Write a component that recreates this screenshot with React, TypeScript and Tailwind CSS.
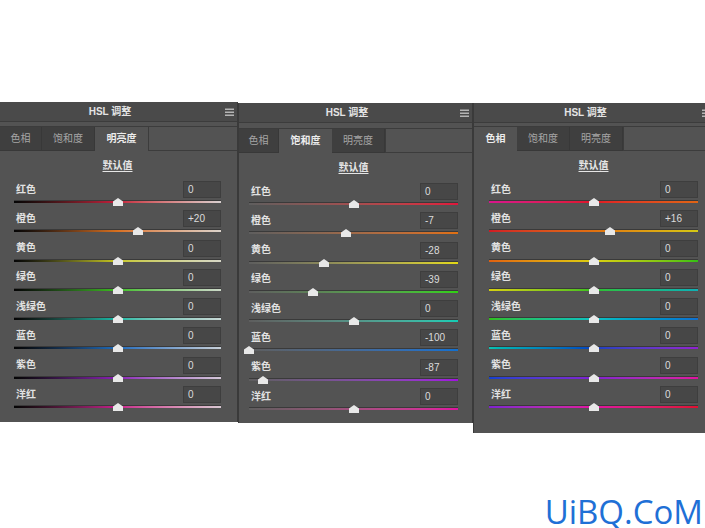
import React from 'react'

const names = ['红色', '橙色', '黄色', '绿色', '浅绿色', '蓝色', '紫色', '洋红']
const tabs = ['色相', '饱和度', '明亮度']

const lightGrads = [
  'from-[#050505] via-[#c41e3c] to-[#d8d0d0]',
  'from-[#050505] via-[#d8701e] to-[#dcd4cc]',
  'from-[#050505] via-[#c8c81e] to-[#d8d8c8]',
  'from-[#050505] via-[#3cbe1e] to-[#ccd8c8]',
  'from-[#050505] via-[#14bca8] to-[#c8d8d6]',
  'from-[#050505] via-[#1e6cbc] to-[#c8d0d8]',
  'from-[#050505] via-[#8c1eb8] to-[#d4c8d8]',
  'from-[#050505] via-[#c81e8c] to-[#d8c8d2]',
]

const satGrads = [
  'from-[#5e5e5e] to-[#e0143c]',
  'from-[#5e5e5e] to-[#e07010]',
  'from-[#5e5e5e] to-[#e2d810]',
  'from-[#5e5e5e] to-[#30d010]',
  'from-[#5e5e5e] to-[#10ccb4]',
  'from-[#5e5e5e] to-[#1070d0]',
  'from-[#5e5e5e] to-[#a010e0]',
  'from-[#5e5e5e] to-[#e010a0]',
]

const hueGrads = [
  'from-[#d8148c] via-[#e01424] to-[#e06414]',
  'from-[#d01a24] via-[#e07010] to-[#d4c814]',
  'from-[#e06010] via-[#dcd010] to-[#30c014]',
  'from-[#d4d010] via-[#30c020] to-[#10b0b4]',
  'from-[#30c014] via-[#10c0c0] to-[#1070d0]',
  'from-[#10c0b0] via-[#1040c0] to-[#9020d0]',
  'from-[#1040d0] via-[#8020d0] to-[#e010a0]',
  'from-[#8020d0] via-[#e010a0] to-[#e01030]',
]

const Burger = () => (
  <svg width="9" height="8" viewBox="0 0 9 8" className="mr-[3px] shrink-0">
    <rect x="0" y="0.5" width="9" height="1.5" fill="#b4b4b4" />
    <rect x="0" y="3.5" width="9" height="1.5" fill="#b4b4b4" />
    <rect x="0" y="6.5" width="9" height="1.5" fill="#b4b4b4" />
  </svg>
)

const Thumb = ({ pct }: { pct: number }) => (
  <svg
    width="10"
    height="8"
    viewBox="0 0 10 8"
    className="absolute top-[-3px]"
    style={{ left: `calc(${pct}% - 5px)` }}
  >
    <polygon points="5,0 10,3.5 10,8 0,8 0,3.5" fill="#e8e8e8" />
  </svg>
)

type PanelProps = {
  active: number
  values: number[]
  grads: string[]
  outer: string
  spacer: string
  firstTab: string
  pad: string
}

const fmt = (v: number) => (v > 0 ? `+${v}` : `${v}`)

const Panel = ({ active, values, grads, outer, spacer, firstTab, pad }: PanelProps) => {
  return (
    <div className={`flex shrink-0 flex-col bg-[#535353] ${outer}`}>
      <div className="flex h-[20px] shrink-0 items-center border-b border-[#3c3c3c] bg-[#4a4a4a]">
        <div className="flex-1 pr-[5px] text-center text-[10px] font-bold leading-[14px] text-[#e4e4e4]">
          HSL 调整
        </div>
        <Burger />
      </div>
      <div className={spacer} />
      <div className="flex h-[25px] shrink-0 border-t border-[#3c3c3c]">
        {tabs.map((t, i) => (
          <div
            key={t}
            className={`flex items-center justify-center text-[10px] leading-[14px] ${
              i === 0 ? firstTab : 'w-[53px]'
            } ${
              i === active
                ? 'bg-[#535353] font-bold text-[#ececec]'
                : 'border-b border-r border-[#383838] bg-[#3f3f3f] text-[#a6a6a6]'
            }`}
          >
            {t}
          </div>
        ))}
        <div className="flex-1 border-b border-l border-[#3c3c3c]" />
      </div>
      <div className={`flex flex-col ${pad}`}>
        <div className="mt-[8px] text-center text-[10px] font-bold leading-[14px] text-[#e6e6e6] underline underline-offset-2">
          默认值
        </div>
        <div className="mt-[8px] flex flex-col">
          {names.map((n, i) => (
            <div key={n} className="flex h-[29.3px] flex-col">
              <div className="flex h-[17px] items-center justify-between">
                <span className="pl-[2px] text-[10px] font-semibold leading-[14px] text-[#e2e2e2]">{n}</span>
                <div className="flex h-[17px] w-[38px] items-center border border-[#3e3e3e] bg-[#474747] pl-[4px] text-[10px] text-[#dcdcdc]">
                  {fmt(values[i])}
                </div>
              </div>
              <div className={`relative mt-[3px] h-[2px] bg-linear-to-r shadow-[0_-1px_0_#3a3a3a] ${grads[i]}`}>
                <Thumb pct={50 + values[i] / 2} />
              </div>
            </div>
          ))}
        </div>
      </div>
    </div>
  )
}

export default function App() {
  return (
    <div className="relative h-[528px] w-[705px] overflow-hidden bg-white font-[family-name:Liberation_Sans,Noto_Sans_CJK_SC,sans-serif]">
      <div className="flex items-start pt-[102px]">
        <Panel
          active={2}
          values={[0, 20, 0, 0, 0, 0, 0, 0]}
          grads={lightGrads}
          outer="h-[320px] w-[238px] border-r border-[#3a3a3a]"
          spacer="h-[4px]"
          firstTab="w-[42px]"
          pad="pl-[14px] pr-[16px]"
        />
        <Panel
          active={1}
          values={[0, -7, -28, -39, 0, -100, -87, 0]}
          grads={satGrads}
          outer="mt-[1px] h-[320px] w-[235px] border-x border-[#3a3a3a]"
          spacer="h-[5px]"
          firstTab="w-[40px]"
          pad="pl-[10px] pr-[14px]"
        />
        <Panel
          active={0}
          values={[0, 16, 0, 0, 0, 0, 0, 0]}
          grads={hueGrads}
          outer="mt-[1px] h-[330px] w-[241px] border-l border-[#3a3a3a]"
          spacer="h-[3px]"
          firstTab="w-[43px]"
          pad="pl-[15px] pr-[16px]"
        />
      </div>
      <div className="absolute bottom-0 right-[2px] font-[family-name:Open_Sans,sans-serif] text-[33px] leading-[32px] text-[#1f70d6]">
        UiBQ.CoM
      </div>
    </div>
  )
}
